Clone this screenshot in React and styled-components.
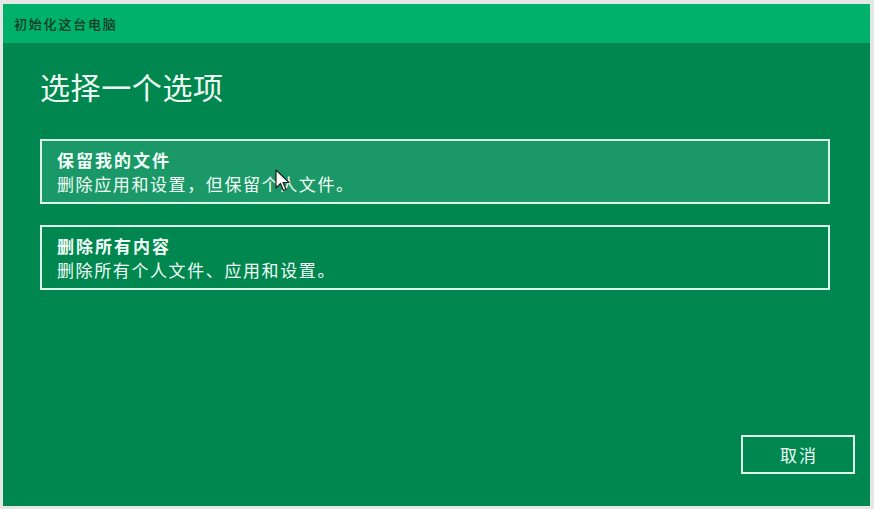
import React from "react";
import styled, { createGlobalStyle } from "styled-components";

const Global = createGlobalStyle`
  html, body { margin: 0; padding: 0; background: #e3e8e5; }
  body { font-family: "Noto Sans CJK SC", "Microsoft YaHei", "Noto Sans", sans-serif; }
  #root { width: 874px; height: 509px; }
`;

const Screen = styled.div`
  width: 874px;
  height: 509px;
  padding: 4px 4px 3px 3px;
  box-sizing: border-box;
  background: #e3e8e5;
  display: flex;
`;

const Window = styled.div`
  flex: 1;
  display: flex;
  flex-direction: column;
  background: #00874f;
  position: relative;
  overflow: hidden;
`;

const TitleBar = styled.div`
  height: 39px;
  flex: none;
  background: #00b16b;
  display: flex;
  align-items: center;
  padding-left: 11px;
  padding-bottom: 1px;
  box-sizing: border-box;
  font-size: 13px;
  font-weight: 500;
  letter-spacing: 1.8px;
  color: #0f3a24;
`;

const Body = styled.div`
  flex: 1;
  display: flex;
  flex-direction: column;
  padding: 26px 40px 32px 37px;
  box-sizing: border-box;
`;

const Heading = styled.h1`
  margin: 0 0 36px 0;
  font-size: 30px;
  line-height: 34px;
  font-weight: 400;
  letter-spacing: 0.6px;
  color: #eefcf4;
`;

const OptionList = styled.div`
  display: flex;
  flex-direction: column;
  gap: 21px;
`;

const Option = styled.div`
  height: 65px;
  box-sizing: border-box;
  border: 2px solid #dcf6ea;
  background: ${(p) => (p.$hover ? "#1b9867" : "transparent")};
  padding: 8px 0 0 15px;
  color: #f2fff8;
  display: flex;
  flex-direction: column;
`;

const OptionTitle = styled.div`
  font-size: 17px;
  font-weight: 700;
  line-height: 22px;
  letter-spacing: 2px;
`;

const OptionDesc = styled.div`
  font-size: 17px;
  line-height: 26px;
  letter-spacing: 1.6px;
`;

const Footer = styled.div`
  margin-top: auto;
  display: flex;
  justify-content: flex-end;
  margin-right: -25px;
`;

const Button = styled.button`
  width: 114px;
  height: 39px;
  box-sizing: border-box;
  border: 2px solid #dcf6ea;
  background: transparent;
  color: #f2fff8;
  font-family: inherit;
  font-size: 17px;
  letter-spacing: 2px;
  padding: 0 0 0 2px;
`;

const Cursor = styled.svg`
  position: absolute;
  left: 272px;
  top: 165px;
  width: 16px;
  height: 24px;
`;

export default function App() {
  return (
    <>
      <Global />
      <Screen>
        <Window>
          <TitleBar>初始化这台电脑</TitleBar>
          <Body>
            <Heading>选择一个选项</Heading>
            <OptionList>
              <Option $hover>
                <OptionTitle>保留我的文件</OptionTitle>
                <OptionDesc>删除应用和设置，但保留个人文件。</OptionDesc>
              </Option>
              <Option>
                <OptionTitle>删除所有内容</OptionTitle>
                <OptionDesc>删除所有个人文件、应用和设置。</OptionDesc>
              </Option>
            </OptionList>
            <Footer>
              <Button>取消</Button>
            </Footer>
          </Body>
          <Cursor viewBox="0 0 16 24">
            <path d="M1 1 L1 19 L5.5 14.5 L8.5 21.5 L11 20.5 L8 13.5 L14 13.5 Z" fill="#ffffff" stroke="#222" strokeWidth="1.2" strokeLinejoin="round" />
          </Cursor>
        </Window>
      </Screen>
    </>
  );
}
